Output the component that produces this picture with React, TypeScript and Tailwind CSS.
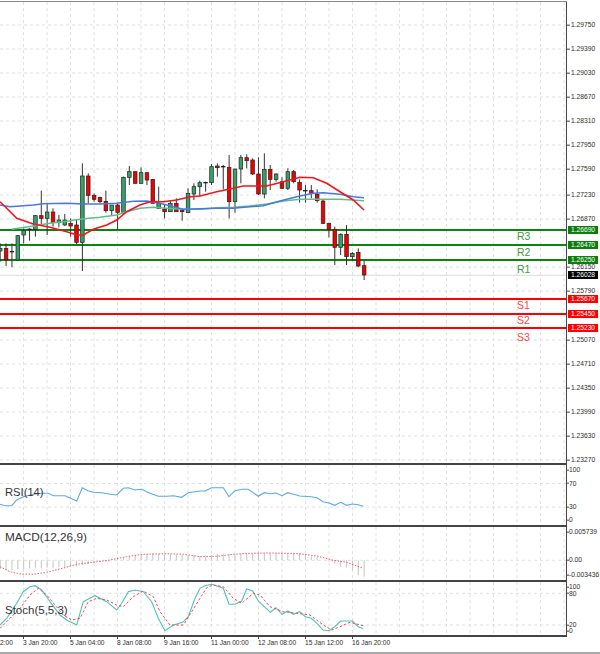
import React from "react";

// all chart data below is in 3x units: x from the left edge, y from the given base line
type Pt = [number, number];

const toPoints = (list: Pt[], base: number) =>
  list.map(([x, y]) => `${(x / 3).toFixed(1)},${(base + y / 3).toFixed(1)}`).join(" ");

const candleX = (k: number) => 0.2 + 5.87 * k;

// [wick top, wick bottom, body top, body bottom, up]
const candles: [number, number, number, number, number][] = [
  [310, 365, 325, 333, 1], [310, 378, 325, 360, 0], [310, 382, 334, 336, 1], [285, 360, 287, 360, 1],
  [265, 310, 272, 285, 1], [265, 302, 267, 269, 1], [225, 290, 227, 268, 1], [152, 255, 227, 235, 0],
  [192, 285, 216, 235, 1], [205, 260, 216, 248, 0], [225, 262, 240, 248, 1], [222, 258, 240, 255, 1],
  [235, 290, 250, 258, 0], [240, 312, 255, 307, 0], [70, 393, 108, 307, 1], [100, 190, 108, 166, 0],
  [160, 185, 166, 178, 0], [170, 190, 172, 185, 0], [152, 218, 184, 212, 0], [195, 225, 195, 212, 1],
  [190, 270, 195, 217, 0], [110, 225, 112, 217, 1], [78, 135, 95, 112, 1], [95, 130, 95, 130, 0],
  [82, 130, 98, 130, 1], [98, 135, 98, 120, 0], [118, 190, 118, 190, 0], [140, 205, 190, 205, 1],
  [195, 235, 207, 215, 0], [180, 215, 190, 215, 1], [175, 215, 190, 215, 0], [205, 242, 210, 215, 0],
  [145, 218, 160, 218, 1], [130, 180, 140, 162, 1], [122, 170, 128, 140, 1], [125, 155, 127, 129, 1],
  [72, 135, 80, 128, 1], [70, 110, 78, 83, 0], [75, 148, 79, 81, 1], [45, 235, 82, 185, 0],
  [87, 218, 87, 185, 1], [45, 130, 53, 87, 1], [43, 85, 53, 62, 0], [55, 105, 60, 102, 0],
  [52, 165, 102, 162, 0], [40, 175, 88, 162, 1], [75, 150, 88, 118, 0], [100, 125, 102, 118, 1],
  [112, 147, 125, 145, 0], [85, 150, 95, 145, 1], [90, 130, 95, 125, 0], [118, 188, 127, 150, 0],
  [135, 188, 151, 153, 1], [135, 175, 152, 160, 0], [148, 188, 163, 182, 0], [180, 252, 183, 250, 0],
  [248, 292, 250, 268, 0], [260, 375, 268, 322, 0], [280, 345, 283, 322, 1], [255, 375, 283, 350, 0],
  [336, 362, 340, 350, 1], [325, 382, 337, 378, 0], [362, 420, 377, 405, 0],
];

const blueMa: Pt[] = [[0, 195], [30, 200], [60, 198], [100, 195], [130, 191], [200, 190], [250, 192], [300, 192], [350, 190], [400, 184], [440, 183], [480, 190], [520, 200], [550, 208], [650, 205], [700, 205], [750, 200], [790, 197], [840, 183], [890, 170], [940, 160], [970, 158], [1020, 163], [1060, 170], [1092, 173]];
const greenMa: Pt[] = [[35, 268], [100, 258], [150, 250], [200, 244], [250, 236], [300, 232], [350, 225], [380, 215], [420, 205], [460, 202], [500, 205], [550, 208], [600, 208], [650, 203], [700, 202], [750, 198], [800, 192], [850, 183], [900, 178], [960, 178], [1020, 178], [1092, 182]];
const redMa: Pt[] = [[0, 185], [20, 205], [50, 235], [100, 252], [150, 262], [200, 275], [230, 285], [250, 285], [280, 268], [320, 255], [350, 240], [380, 215], [420, 195], [450, 185], [490, 185], [530, 180], [570, 170], [600, 168], [650, 155], [700, 145], [730, 138], [800, 138], [850, 125], [900, 112], [940, 113], [980, 130], [1020, 155], [1060, 180], [1092, 210]];

const rsi: Pt[] = [[0, 148], [15, 152], [35, 152], [50, 135], [70, 125], [100, 118], [125, 115], [145, 115], [160, 122], [195, 122], [230, 138], [247, 98], [265, 108], [280, 112], [305, 113], [330, 118], [350, 120], [370, 100], [385, 98], [405, 105], [425, 103], [450, 115], [475, 124], [500, 124], [520, 122], [545, 127], [565, 113], [600, 108], [615, 108], [635, 98], [670, 98], [687, 125], [705, 107], [725, 103], [745, 103], [775, 124], [793, 113], [810, 116], [828, 114], [846, 122], [863, 113], [881, 118], [899, 123], [934, 125], [951, 128], [969, 140], [987, 144], [1004, 151], [1022, 142], [1040, 151], [1057, 147], [1075, 149], [1090, 154]];

const macdSignal: Pt[] = [[0, 335], [30, 350], [60, 357], [100, 358], [140, 352], [180, 342], [230, 328], [280, 322], [330, 315], [380, 305], [430, 298], [500, 296], [550, 298], [600, 305], [650, 304], [700, 298], [750, 295], [800, 294], [850, 295], [900, 296], [950, 303], [1000, 316], [1040, 322], [1090, 340]];
const macdBars = [342, 345, 345, 342, 342, 340, 340, 340, 338, 338, 336, 336, 334, 334, 330, 326, 322, 320, 320, 316, 312, 310, 305, 302, 298, 296, 294, 296, 298, 298, 298, 300, 300, 300, 304, 304, 300, 296, 296, 298, 298, 296, 296, 296, 294, 294, 294, 294, 296, 296, 296, 296, 298, 304, 306, 316, 320, 326, 335, 338, 345, 360, 365];

const stochMain: Pt[] = [[0, 510], [20, 490], [50, 445], [70, 410], [90, 395], [105, 392], [125, 405], [150, 440], [180, 480], [200, 495], [230, 510], [250, 440], [265, 432], [285, 422], [320, 440], [350, 465], [365, 445], [385, 410], [405, 405], [430, 410], [455, 440], [475, 490], [495, 527], [520, 510], [548, 502], [565, 485], [585, 430], [600, 400], [615, 392], [635, 388], [670, 400], [687, 448], [705, 448], [725, 438], [740, 402], [758, 408], [775, 438], [811, 472], [828, 458], [846, 478], [863, 468], [881, 478], [899, 470], [916, 485], [934, 490], [951, 505], [969, 525], [987, 527], [1004, 515], [1022, 498], [1057, 498], [1075, 515], [1090, 521]];
const stochSignal: Pt[] = [[0, 520], [30, 490], [60, 460], [90, 420], [115, 400], [140, 420], [165, 450], [190, 480], [215, 495], [240, 490], [265, 440], [290, 430], [320, 435], [350, 450], [370, 455], [400, 425], [430, 408], [460, 425], [480, 470], [510, 510], [550, 510], [575, 470], [600, 430], [620, 398], [640, 390], [670, 395], [700, 430], [725, 445], [760, 415], [780, 420], [810, 455], [850, 470], [890, 475], [930, 480], [970, 510], [995, 525], [1020, 515], [1050, 502], [1090, 512]];

const priceTicks: [string, number][] = [
  ["1.29750", 25], ["1.29390", 49], ["1.29030", 73], ["1.28670", 97], ["1.28310", 121], ["1.27950", 145],
  ["1.27590", 169], ["1.27230", 195], ["1.26870", 219], ["1.26150", 267], ["1.25790", 291], ["1.25070", 340],
  ["1.24710", 364], ["1.24350", 388], ["1.23990", 412], ["1.23630", 436], ["1.23270", 460],
];

const levels = [
  { name: "R3", price: "1.26690", y: 230, ty: 236, up: true },
  { name: "R2", price: "1.26470", y: 245, ty: 252, up: true },
  { name: "R1", price: "1.26250", y: 260, ty: 269, up: true },
  { name: "S1", price: "1.25670", y: 299, ty: 305, up: false },
  { name: "S2", price: "1.25450", y: 314, ty: 320, up: false },
  { name: "S3", price: "1.25230", y: 328, ty: 337, up: false },
];

const timeLabels = [
  { text: "3 Jan 20:00", x: 23 }, { text: "5 Jan 04:00", x: 70 }, { text: "8 Jan 08:00", x: 117 },
  { text: "9 Jan 16:00", x: 164 }, { text: "11 Jan 00:00", x: 211 }, { text: "12 Jan 08:00", x: 258 },
  { text: "15 Jan 12:00", x: 305 }, { text: "16 Jan 20:00", x: 352 },
];

const gridXs = Array.from({ length: 24 }, (_, i) => 23.5 * (i + 1));

function Grid({ top, height, ys }: { top: number; height: number; ys: number[] }) {
  return (
    <g stroke="#e0e0e0" strokeWidth="1" strokeDasharray="3 3">
      {gridXs.map((x) => (
        <line key={x} x1={x} x2={x} y1={top} y2={top + height} />
      ))}
      {ys.map((y) => (
        <line key={y} x1={0} x2={566} y1={y} y2={y} />
      ))}
    </g>
  );
}

function AxisLabel({ text, y, top, gap }: { text: string; y: number; top: number; gap?: boolean }) {
  return (
    <div
      className="absolute left-0 flex -translate-y-1/2 items-center whitespace-nowrap text-[6.7px] leading-none text-[#2b2b2b]"
      style={{ top: y - top }}
    >
      <span className={gap ? "mr-px h-px w-[3px] bg-[#444444]" : "h-px w-[2px] bg-[#444444]"} />
      {text}
    </div>
  );
}

function PriceBox({ text, y, color }: { text: string; y: number; color: string }) {
  return (
    <div
      className={`absolute left-px flex h-[8px] w-[30px] -translate-y-1/2 items-center justify-center text-[6.7px] leading-none text-white ${color}`}
      style={{ top: y - 2 }}
    >
      {text}
    </div>
  );
}

function MainPanel() {
  return (
    <div className="flex">
      <div className="relative h-[463px] w-[567px] border-r-[1.5px] border-b-2 border-[#444444]">
        <svg className="block" width="566" height="461" viewBox="0 2 566 461">
          <Grid top={2} height={461} ys={priceTicks.map((t) => t[1])} />
          <line x1="0" x2="566" y1="275.3" y2="275.3" stroke="#dddddd" strokeWidth="1" />
          {levels.map((l) => (
            <line key={l.name} x1="0" x2="566" y1={l.y} y2={l.y} stroke={l.up ? "#0b860b" : "#ff0000"} strokeWidth="1.8" />
          ))}
          {candles.map(([hi, lo, top, bottom, up], k) => (
            <g key={k}>
              <line x1={candleX(k)} x2={candleX(k)} y1={140 + hi / 3} y2={140 + lo / 3} stroke="#333333" strokeWidth="1" />
              <rect
                x={candleX(k) - 1.8}
                y={140 + top / 3}
                width="3.6"
                height={(bottom - top) / 3}
                fill={up ? "#35a068" : "#f00000"}
                stroke="#222222"
                strokeWidth="0.7"
              />
            </g>
          ))}
          <polyline points={toPoints(greenMa, 140)} fill="none" stroke="#5fbf8c" strokeWidth="1.6" />
          <polyline points={toPoints(blueMa, 140)} fill="none" stroke="#4a78e0" strokeWidth="1.6" />
          <polyline points={toPoints(redMa, 140)} fill="none" stroke="#f5141e" strokeWidth="1.6" />
        </svg>
        {levels.map((l) => (
          <span
            key={l.name}
            className={`absolute left-[517px] -translate-y-1/2 text-[10.5px] leading-none ${l.up ? "text-[#3f9a3f]" : "text-[#ff4545]"}`}
            style={{ top: l.ty - 2 }}
          >
            {l.name}
          </span>
        ))}
      </div>
      <div className="relative w-[33px]">
        {priceTicks.map(([text, y]) => (
          <AxisLabel key={text} text={text} y={y} top={2} gap />
        ))}
        {levels.map((l) => (
          <PriceBox key={l.price} text={l.price} y={l.y} color={l.up ? "bg-[#0b7f0b]" : "bg-[#ff0000]"} />
        ))}
        <PriceBox text="1.26028" y={275.3} color="bg-black" />
      </div>
    </div>
  );
}

function SubPanel({
  title,
  titleY,
  titleClass,
  top,
  height,
  ys,
  labels,
  boxClass,
  children,
}: {
  title: string;
  titleY: number;
  titleClass: string;
  top: number;
  height: number;
  ys: number[];
  labels: [string, number][];
  boxClass: string;
  children: React.ReactNode;
}) {
  return (
    <div className="flex">
      <div className={`relative w-[567px] border-r-[1.5px] border-b-2 border-[#444444] ${boxClass}`}>
        <svg className="block" width="566" height={height} viewBox={`0 ${top} 566 ${height}`}>
          <Grid top={top} height={height} ys={ys} />
          {children}
        </svg>
        <span
          className={`absolute left-[5px] -translate-y-1/2 leading-none text-[#333333] ${titleClass}`}
          style={{ top: titleY - top }}
        >
          {title}
        </span>
      </div>
      <div className="relative w-[33px]">
        {labels.map(([text, y]) => (
          <AxisLabel key={text} text={text} y={y} top={top} />
        ))}
      </div>
    </div>
  );
}

export default function App() {
  return (
    <div className="flex h-[654px] w-[600px] flex-col overflow-hidden bg-white font-['Liberation_Sans',sans-serif]">
      <div className="mt-px h-px w-[567px] bg-[#8a8a8a]" />
      <MainPanel />
      <SubPanel
        title="RSI(14)"
        titleClass="text-[11.2px]"
        titleY={493}
        top={465}
        height={60}
        boxClass="h-[62px]"
        ys={[483.5, 507]}
        labels={[["100", 470], ["70", 483.5], ["30", 507], ["0", 520]]}
      >
        <polyline points={toPoints(rsi, 455)} fill="none" stroke="#5aa9ee" strokeWidth="1.1" />
      </SubPanel>
      <SubPanel
        title="MACD(12,26,9)"
        titleClass="text-[11.8px]"
        titleY={538}
        top={527}
        height={53}
        boxClass="h-[55px]"
        ys={[560.3]}
        labels={[["0.005739", 532], ["0.00", 560.3], ["-0.003436", 575]]}
      >
        {macdBars.map((v, k) => (
          <line key={k} x1={candleX(k)} x2={candleX(k)} y1={560.3} y2={455 + v / 3} stroke="#c4c4c4" strokeWidth="1" />
        ))}
        <polyline points={toPoints(macdSignal, 455)} fill="none" stroke="#f04848" strokeWidth="0.9" strokeDasharray="1.5 1.5" />
      </SubPanel>
      <SubPanel
        title="Stoch(5,5,3)"
        titleClass="text-[11.5px]"
        titleY={611}
        top={582}
        height={53}
        boxClass="h-[55px]"
        ys={[593.3, 625]}
        labels={[["100", 587], ["80", 593.5], ["20", 625], ["0", 631]]}
      >
        <polyline points={toPoints(stochMain, 455)} fill="none" stroke="#4cc4b8" strokeWidth="1.1" />
        <polyline points={toPoints(stochSignal, 455)} fill="none" stroke="#f04848" strokeWidth="1" strokeDasharray="2.5 2" />
      </SubPanel>
      <div className="relative h-[15px] w-[567px] text-[6.6px] leading-none text-[#2b2b2b]">
        <span className="absolute left-0 top-[3px]">2:00</span>
        {timeLabels.map((t) => (
          <React.Fragment key={t.text}>
            <span className="absolute top-0 h-[2px] w-px bg-[#444444]" style={{ left: t.x }} />
            <span className="absolute top-[3px] whitespace-nowrap" style={{ left: t.x }}>
              {t.text}
            </span>
          </React.Fragment>
        ))}
      </div>
      <div className="h-[2px] w-full bg-[#a8a8a8]" />
    </div>
  );
}
